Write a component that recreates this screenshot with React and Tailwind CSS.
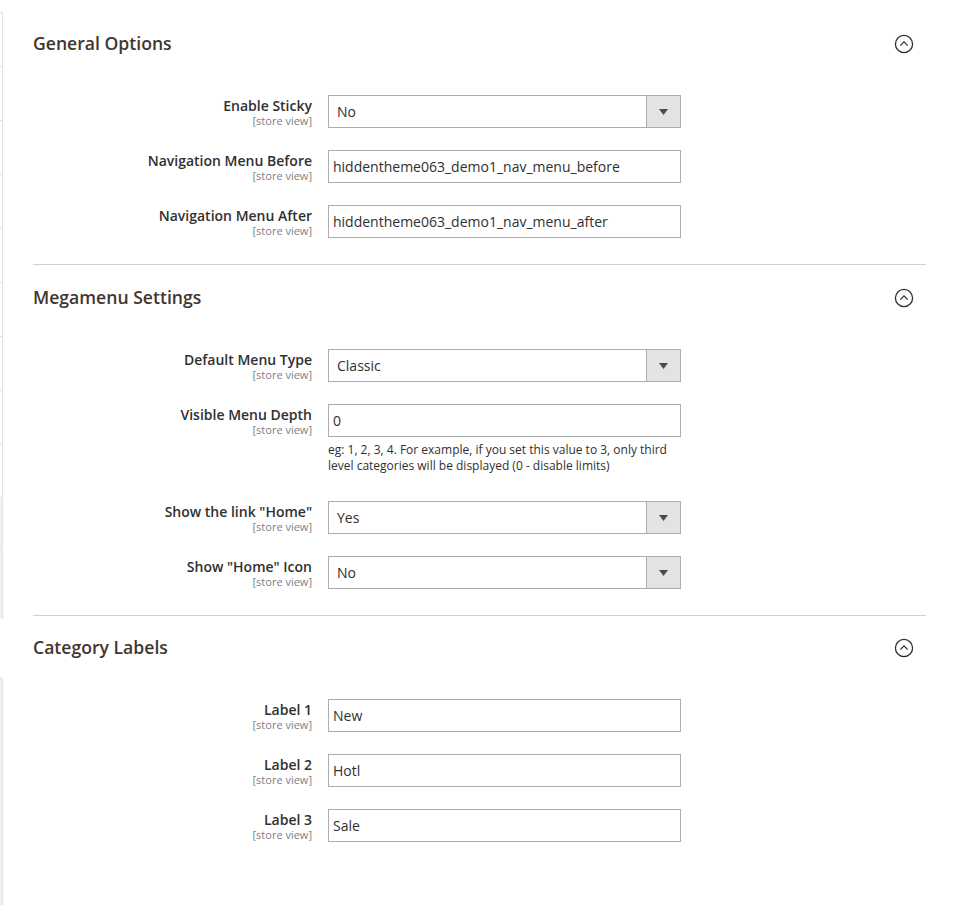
import React from 'react';

const sections = [
  {
    title: 'General Options',
    fields: [
      { label: 'Enable Sticky', type: 'select', value: 'No' },
      { label: 'Navigation Menu Before', type: 'text', value: 'hiddentheme063_demo1_nav_menu_before' },
      { label: 'Navigation Menu After', type: 'text', value: 'hiddentheme063_demo1_nav_menu_after' },
    ],
  },
  {
    title: 'Megamenu Settings',
    fields: [
      { label: 'Default Menu Type', type: 'select', value: 'Classic' },
      {
        label: 'Visible Menu Depth',
        type: 'text',
        value: '0',
        note: 'eg: 1, 2, 3, 4. For example, if you set this value to 3, only third level categories will be displayed (0 - disable limits)',
      },
      { label: 'Show the link "Home"', type: 'select', value: 'Yes' },
      { label: 'Show "Home" Icon', type: 'select', value: 'No' },
    ],
  },
  {
    title: 'Category Labels',
    fields: [
      { label: 'Label 1', type: 'text', value: 'New' },
      { label: 'Label 2', type: 'text', value: 'Hotl' },
      { label: 'Label 3', type: 'text', value: 'Sale' },
    ],
  },
];

const CollapseIcon = () => (
  <svg width="20" height="20" viewBox="0 0 20 20" fill="none">
    <circle cx="10" cy="10" r="8.6" stroke="#303030" strokeWidth="1.3" />
    <path d="M6.3 11.6 L10 7.9 L13.7 11.6" stroke="#303030" strokeWidth="1.3" />
  </svg>
);

const Field = ({ field }) => (
  <div className="flex items-start mb-[22px]">
    <div className="w-[279px] pt-[3px] text-right">
      <div className="text-[14px] leading-[16px] font-semibold text-[#303030]">{field.label}</div>
      <div className="text-[11px] leading-[13px] text-[#808080]">[store view]</div>
    </div>
    <div className="ml-4 w-[353px]">
      {field.type === 'select' ? (
        <div className="flex h-[33px] border border-[#adadad] bg-white">
          <div className="flex-1 flex items-center pl-2 text-[14px] text-[#303030]">{field.value}</div>
          <div className="w-[34px] flex items-center justify-center bg-[#e3e3e3] border-l border-[#adadad]">
            <svg width="9" height="6" viewBox="0 0 9 6">
              <path d="M0 0 H9 L4.5 6 Z" fill="#514943" />
            </svg>
          </div>
        </div>
      ) : (
        <div className="flex items-center h-[33px] border border-[#adadad] bg-white pl-1 text-[14px] text-[#303030]">
          {field.value}
        </div>
      )}
      {field.note && (
        <div className="mt-[5px] pb-[5px] text-[12px] leading-[16px] text-[#303030] pr-2">{field.note}</div>
      )}
    </div>
  </div>
);

const Section = ({ section, index, last }) => {
  const pad = index === 0 ? 'pt-[23px]' : last ? 'pt-[11px]' : 'pt-[12px]';
  return (
    <div className={`${pad} ${last ? '' : 'border-b border-[#d1d1d1] pb-[4px]'}`}>
      <div className="flex items-center justify-between h-10">
        <h2 className="text-[17.6px] font-semibold text-[#41362f]">{section.title}</h2>
        <div className="mr-[12px] mt-[2px]">
          <CollapseIcon />
        </div>
      </div>
      <div className="mt-8">
        {section.fields.map((f) => (
          <Field key={f.label} field={f} />
        ))}
      </div>
    </div>
  );
};

const SideStrip = () => (
  <div className="w-[3px] flex flex-col">
    <div className="mt-[12px] border-t border-r border-[#e3e3e3]">
      {[0, 1, 2, 3, 4, 5, 6, 7].map((i) => (
        <div key={i} className="h-[54px] border-b border-[#e3e3e3]" />
      ))}
      <div className="h-[53px] border-b border-[#e3e3e3]" />
      <div className="h-[54px] bg-[#f0f0f0] border-b border-[#e3e3e3]" />
      <div className="h-[67px] bg-[#f0f0f0]" />
    </div>
    <div className="mt-[59px] flex-1 bg-[#f0f0f0] border-t border-r border-[#e3e3e3]" />
  </div>
);

const App = () => {
  return (
    <div className="flex min-h-[905px] bg-white" style={{ fontFamily: '"Open Sans", "Liberation Sans", sans-serif' }}>
      <SideStrip />
      <div className="flex-1 pl-[30px] pr-[30px] pb-[40px]">
        {sections.map((s, i) => (
          <Section key={s.title} section={s} index={i} last={i === sections.length - 1} />
        ))}
      </div>
    </div>
  );
};

export default App;
